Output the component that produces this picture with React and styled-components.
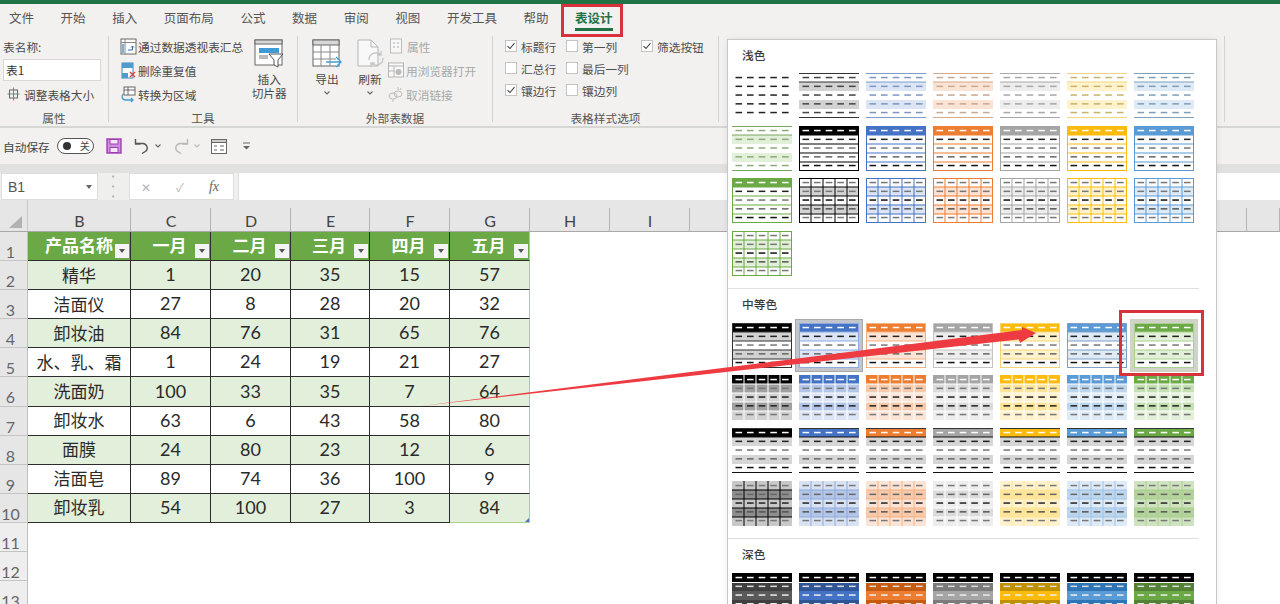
import React from 'react';
import styled, { createGlobalStyle } from 'styled-components';

const GlobalStyle = createGlobalStyle`
  html, body {
    margin: 0;
    padding: 0;
    background: #fff;
    font-family: "Noto Sans CJK SC", "Noto Sans", sans-serif;
  }
`;

const Page = styled.div`
  position: relative;
  width: 1280px;
  height: 604px;
  overflow: hidden;
  display: flex;
  flex-direction: column;
  background: #f2f1ef;
  color: #444;
  font-size: 11.7px;
`;

const TitleEdge = styled.div`
  height: 4px;
  background: #217346;
`;

const TabBar = styled.div`
  height: 30px;
  display: flex;
  align-items: flex-start;
  gap: 26.6px;
  padding-left: 9px;
`;

const Tab = styled.div`
  position: relative;
  font-size: 12.5px;
  line-height: 27px;
  height: 27px;
  color: ${({ $active }) => ($active ? '#217346' : '#555')};
  font-weight: ${({ $active }) => ($active ? 700 : 400)};

  ${({ $active }) => $active && `
    &::after {
      content: '';
      position: absolute;
      left: 0;
      right: 0;
      bottom: 0;
      height: 3px;
      background: #217346;
    }
  `}
`;

const Ribbon = styled.div`
  height: 92px;
  display: flex;
  border-bottom: 2px solid #d6d6d4;
  box-sizing: content-box;
`;

const Group = styled.div`
  width: ${({ $w }) => $w}px;
  box-sizing: border-box;
  margin: 2px 0 4px;
  border-right: 1px solid #d2d2d0;
  display: flex;
  flex-direction: column;
`;

const GroupBody = styled.div`
  flex: none;
  height: 72px;
  margin: -2px 0 2px;
  display: flex;
  padding-left: ${({ $pad }) => $pad || 0}px;
`;

const GroupLabel = styled.div`
  height: 20px;
  line-height: 20px;
  text-align: center;
  color: #555;
`;

const Stack = styled.div`
  display: flex;
  flex-direction: column;
`;

const ToolRow = styled.div`
  height: 24px;
  display: flex;
  align-items: center;
  gap: ${({ $gap }) => $gap || 1}px;
  white-space: nowrap;
  color: ${({ $off }) => ($off ? '#a8a8a8' : '#4a4a4a')};
`;

const NameInput = styled.div`
  width: 98px;
  height: 22px;
  box-sizing: border-box;
  border: 1px solid #d8d8d8;
  background: #fff;
  line-height: 20px;
  padding-left: 2px;
  color: #333;
`;

const BigTool = styled.div`
  width: ${({ $w }) => $w}px;
  margin-left: ${({ $gap }) => $gap}px;
  padding-top: 5px;
  display: flex;
  flex-direction: column;
  align-items: center;
  line-height: 14px;
  text-align: center;
  color: #4a4a4a;

  svg:first-child {
    margin-bottom: 3px;
  }

  span + svg {
    margin-top: 5px;
  }
`;

const OptionGrid = styled.div`
  display: grid;
  grid-template-columns: 61px 75px auto;
  grid-auto-rows: 22px;
  padding-top: 1px;
`;

const Option = styled.div`
  display: flex;
  align-items: center;
  gap: 4px;
  white-space: nowrap;
  color: #4f4f4f;
`;

const Box = styled.span`
  width: 12px;
  height: 12px;
  box-sizing: border-box;
  border: 1px solid #c4c4c4;
  background: #fff;
  display: flex;
  align-items: center;
  justify-content: center;
`;

const QuickBar = styled.div`
  height: 36px;
  display: flex;
  align-items: center;
  padding-left: 3px;
`;

const Toggle = styled.div`
  position: relative;
  width: 37px;
  height: 16px;
  margin-left: 7px;
  box-sizing: border-box;
  border: 1px solid #555;
  border-radius: 9px;
  background: #fff;
  font-size: 10px;
  line-height: 14px;
  text-align: right;
  padding-right: 3px;

  &::before {
    content: '';
    position: absolute;
    left: 5px;
    top: 3px;
    width: 8px;
    height: 8px;
    border-radius: 50%;
    background: #333;
  }
`;

const QuickIcon = styled.span`
  display: flex;
  margin-left: ${({ $gap }) => $gap}px;
`;

const Strip = styled.div`
  height: 9px;
  background: #e1e1e0;
`;

const FormulaBar = styled.div`
  height: 27px;
  display: flex;
  background: #efefee;
  padding-left: 1px;
`;

const NameBox = styled.div`
  width: 97px;
  box-sizing: border-box;
  background: #fff;
  border: 1px solid #dedede;
  display: flex;
  align-items: center;
  justify-content: space-between;
  padding: 0 5px 0 6px;
  font-family: "Liberation Sans", sans-serif;
  font-size: 14px;
  color: #555;
`;

const Caret = styled.span`
  width: 0;
  height: 0;
  border-left: 3.5px solid transparent;
  border-right: 3.5px solid transparent;
  border-top: 4px solid ${({ $color }) => $color || '#666'};
`;

const Dots = styled.div`
  width: 31px;
  display: flex;
  align-items: center;
  justify-content: center;
  color: #aaa;
  font-size: 9px;
  line-height: 5px;
  writing-mode: vertical-rl;
  letter-spacing: 1px;
`;

const FnBox = styled.div`
  width: 105px;
  box-sizing: border-box;
  background: #fff;
  border: 1px solid #dedede;
  display: flex;
  align-items: center;
  padding-left: 11px;
  gap: 25px;
  color: #b5b5b5;
`;

const FxMark = styled.span`
  font-family: "Liberation Serif", serif;
  font-style: italic;
  font-size: 14px;
  color: #666;
`;

const FormulaInput = styled.div`
  flex: 1;
  margin-left: 4px;
  background: #fff;
  border-left: 1px solid #dedede;
`;

const Sheet = styled.div`
  flex: 1;
  min-height: 0;
  background: #fff;
  display: flex;
  flex-direction: column;
`;

const HeadRow = styled.div`
  height: 32px;
  flex: none;
  display: flex;
  background: #e6e6e6;
  border-bottom: 1px solid #a8a8a8;
  box-sizing: border-box;
`;

const Corner = styled.div`
  width: 28px;
  display: flex;
  align-items: flex-end;
  justify-content: center;
  padding-bottom: 3px;
  box-sizing: border-box;
  border-right: 1px solid #c8c8c8;

  &::before {
    content: '';
    width: 0;
    height: 0;
    margin-left: 4px;
    border-left: 13px solid transparent;
    border-bottom: 12px solid #b2b2b2;
  }
`;

const ColHead = styled.div`
  width: ${({ $w }) => $w}px;
  box-sizing: border-box;
  position: relative;
  text-align: center;
  font-family: Lato, sans-serif;
  font-size: 16px;
  line-height: 20px;
  padding-top: 11px;
  color: #444;

  &::after {
    content: '';
    position: absolute;
    right: 0;
    top: 8px;
    bottom: 0;
    width: 1px;
    background: #b4b4b4;
  }
`;

const Row = styled.div`
  height: 29.1px;
  flex: none;
  display: flex;
`;

const RowHead = styled.div`
  width: 28px;
  box-sizing: border-box;
  background: ${({ $dim }) => ($dim ? '#eeeeee' : '#e6e6e6')};
  border-right: 1px solid #c0c0c0;
  border-bottom: 1px solid #c4c4c4;
  font-family: Lato, sans-serif;
  font-size: 16px;
  color: #666;
  text-align: center;
  padding-right: 6px;
  line-height: 40px;
  overflow: hidden;
`;

const Cell = styled.div`
  position: relative;
  width: ${({ $w }) => $w}px;
  box-sizing: border-box;
  display: flex;
  align-items: center;
  justify-content: center;
  white-space: nowrap;
  padding-bottom: 2px;
  background: ${({ $band }) => ($band ? '#e2efda' : '#fff')};
  border-right: 1px solid ${({ $last }) => ($last ? '#a9d08e' : '#2c2c2c')};
  border-bottom: 1px solid #2c2c2c;
  color: #2a2a2a;
  font-family: Lato, "Noto Sans CJK SC", sans-serif;
  font-size: 18px;

  ${({ $zh }) => $zh && `
    font-family: "Noto Sans CJK SC", sans-serif;
    font-size: 17px;
  `}

  ${({ $last, $end }) => $last && $end && `
    border-bottom-color: #a9d08e;
  `}
`;

const HeadCell = styled(Cell)`
  background: #6aa945;
  color: #fff;
  font-family: "Noto Sans CJK SC", sans-serif;
  font-size: 17px;
  font-weight: 700;
  padding-bottom: 3px;
  padding-right: ${({ $wide }) => ($wide ? 0 : 2)}px;
`;

const FilterButton = styled.span`
  position: absolute;
  right: 1px;
  bottom: 2px;
  width: 14px;
  height: 14px;
  background: #f4f4f4;
  display: flex;
  align-items: center;
  justify-content: center;
`;

const ResizeHandle = styled.span`
  position: absolute;
  right: 0;
  bottom: 0;
  width: 0;
  height: 0;
  border-left: 4px solid transparent;
  border-bottom: 4px solid #4472c4;
`;

const StylePopup = styled.div`
  position: absolute;
  left: 727px;
  top: 39px;
  width: 490px;
  height: 565px;
  box-sizing: border-box;
  background: #fff;
  border: 1px solid #c8c8c8;
  border-bottom: 0;
  box-shadow: 0 0 6px rgba(0, 0, 0, 0.08);
`;

const Section = styled.div`
  padding: 6px 0 12px 4px;
  border-bottom: ${({ $end }) => ($end ? 0 : '1px solid #dfdfdf')};
  margin-right: 17px;
`;

const SectionTitle = styled.div`
  font-size: 11.7px;
  line-height: 18px;
  font-weight: 500;
  color: #3a3a3a;
  padding-left: 10px;
  margin-bottom: ${({ $first }) => ($first ? 9 : 10)}px;
`;

const ThumbGrid = styled.div`
  display: grid;
  grid-template-columns: repeat(7, 60px);
  grid-auto-rows: 45px;
  column-gap: 7px;
  row-gap: 7.6px;
`;

const ThumbCell = styled.div`
  width: 60px;
  height: 45px;
  ${({ $mark }) => $mark && `
    box-shadow: 0 0 0 3px ${$mark};
    outline: 1px solid ${$mark === '#c2c6cc' ? '#a8a8a8' : $mark};
    outline-offset: 3px;
  `}

  svg {
    display: block;
    background: #fff;
  }
`;

const Callout = styled.div`
  position: absolute;
  left: ${({ $x }) => $x}px;
  top: ${({ $y }) => $y}px;
  width: ${({ $w }) => $w}px;
  height: ${({ $h }) => $h}px;
  box-sizing: border-box;
  border: 3px solid #d8323c;
`;

const ArrowLayer = styled.svg`
  position: absolute;
  left: 0;
  top: 0;
  pointer-events: none;
`;

const TONES = {
  black: { main: '#000', tint: '#d2d2d2', mid: '#a0a0a0', soft: '#333', rule: '#333', dash: '#444', deep: '#3f3f3f', bright: '#5a5a5a', grid: '#000', deepMid: '#8e8e8e', deepTint: '#c8c8c8' },
  blue: { main: '#4472c4', tint: '#dbe5f5', mid: '#b4c6e7', soft: '#8faadc', rule: '#7f9bc9', dash: '#7f96c0', deep: '#2f5597', bright: '#4472c4', grid: '#8faadc', deepMid: '#b4c6e7', deepTint: '#d9e2f3' },
  orange: { main: '#ed7d31', tint: '#fbe4d5', mid: '#f7caac', soft: '#f4b183', rule: '#d8a888', dash: '#c8a890', deep: '#c55a11', bright: '#ed7d31', grid: '#f4b183', deepMid: '#f7caac', deepTint: '#fbe4d5' },
  gray: { main: '#a5a5a5', tint: '#ededed', mid: '#dbdbdb', soft: '#c4c4c4', rule: '#a8a8a8', dash: '#a8a8a8', deep: '#7b7b7b', bright: '#a5a5a5', grid: '#fff', deepMid: '#dbdbdb', deepTint: '#ededed' },
  gold: { main: '#fdbb0e', tint: '#fff2cc', mid: '#ffe599', soft: '#f4d576', rule: '#f0d77e', dash: '#c8b468', deep: '#bf9000', bright: '#fdbb0e', grid: '#ffe599', deepMid: '#ffe599', deepTint: '#fff2cc' },
  sky: { main: '#5b9bd5', tint: '#deeaf6', mid: '#bdd6ee', soft: '#7f9fc4', rule: '#7f9fb8', dash: '#7f9fb8', deep: '#2e75b6', bright: '#5b9bd5', grid: '#9dc3e6', deepMid: '#bdd6ee', deepTint: '#deeaf6' },
  green: { main: '#6aa945', tint: '#e2efd9', mid: '#c5e0b3', soft: '#a9d08e', rule: '#7ba65e', dash: '#8cab78', deep: '#538135', bright: '#6aa945', grid: '#a9d08e', deepMid: '#b4d39c', deepTint: '#cfe3c0' },
};

const TONE_ORDER = ['black', 'blue', 'orange', 'gray', 'gold', 'sky', 'green'];

const INK = ['#fff', '#222', '#777', '#666', '#111'];
const ROW_H = 9;
const DASH_X = [3.5, 15, 26.7, 38.3, 50];
const DASH_Y = [4.5, 13.3, 22, 30.8, 39.5];
const V_LINES = [12, 24, 36, 48];

const KINDS = {
  plain: () => ({ fills: [], ink: ['#222', '#222', '#222', '#222', '#222'] }),
  stripe: (t) => ({
    fills: [null, t.tint, null, t.tint, null],
    rules: [[0.5, t.rule], [9, t.rule], [44.5, t.rule]],
    ink: [t.dash, t.dash, t.dash, t.dash, t.dash],
  }),
  outline: (t) => ({ fills: [t.main], border: t.main, h: t.main, ink: INK }),
  grid: (t) => ({
    fills: [null, t.tint, null, t.tint, null],
    border: t.main,
    h: t.main,
    v: t.main,
    ink: ['#777', '#777', '#111', '#555', '#777'],
  }),
  medium1: (t) => ({ fills: [t.main, t.tint, null, t.tint, null], border: t.soft, h: t.soft, ink: INK }),
  medium2: (t) => ({ fills: [t.main, t.mid, t.tint, t.mid, t.tint], h: '#fff', v: '#fff', ink: ['#fff', '#777', '#222', '#222', '#777'] }),
  medium3: (t) => ({
    fills: [t.main, '#d6d6d6', null, '#d6d6d6', null],
    rules: [[0.5, '#333'], [9, '#111'], [44.5, '#111']],
    ink: INK,
  }),
  medium4: (t) => ({
    fills: [t.deepTint, t.deepMid, t.deepTint, t.deepMid, t.deepTint],
    h: t.grid,
    v: t.grid,
    ink: ['#777', '#666', '#222', '#555', '#777'],
  }),
  dark: (t) => ({
    fills: ['#000', t.deep, t.bright, t.deep, t.deep],
    rules: [[9.5, '#fff']],
    ink: ['#fff', '#ddd', '#eee', '#fff', '#fff'],
  }),
};

const Thumb = ({ kind, tone }) => {
  const t = TONES[tone];
  const cfg = KINDS[kind](t);
  return (
    <svg width="60" height="45" viewBox="0 0 60 45">
      {cfg.fills.map((fill, i) => fill && <rect key={i} x="0" y={i * ROW_H} width="60" height={ROW_H} fill={fill} />)}
      {cfg.h && [1, 2, 3, 4].map((i) => <rect key={i} x="0" y={i * ROW_H - 0.5} width="60" height="1" fill={cfg.h} />)}
      {cfg.v && V_LINES.map((x) => <rect key={x} x={x - 0.5} y="0" width="1" height="45" fill={cfg.v} />)}
      {cfg.rules && cfg.rules.map(([y, color]) => <rect key={y} x="0" y={y - 0.5} width="60" height="1" fill={color} />)}
      {cfg.border && <rect x="0.5" y="0.5" width="59" height="44" fill="none" stroke={cfg.border} />}
      {DASH_Y.map((y, r) => DASH_X.map((x) => (
        <rect key={`${r}-${x}`} x={x} y={y - 0.7} width="6.6" height="1.5" fill={cfg.ink[r]} />
      )))}
    </svg>
  );
};

const LIGHT = [
  ['plain', 'black'],
  ...TONE_ORDER.map((tone) => ['stripe', tone]),
  ...TONE_ORDER.map((tone) => ['outline', tone]),
  ...TONE_ORDER.map((tone) => ['grid', tone]),
];
const MEDIUM = ['medium1', 'medium2', 'medium3', 'medium4'].flatMap((kind) => TONE_ORDER.map((tone) => [kind, tone]));
const DARK = TONE_ORDER.map((tone) => ['dark', tone]);
const MARKS = { 1: '#c2c6cc', 6: '#cfd3c8' };

const Gallery = ({ items, marks = {} }) => (
  <ThumbGrid>
    {items.map(([kind, tone], i) => (
      <ThumbCell key={i} $mark={marks[i]}>
        <Thumb kind={kind} tone={tone} />
      </ThumbCell>
    ))}
  </ThumbGrid>
);

const Pivot = () => (
  <svg width="17" height="17" viewBox="0 0 17 17">
    <rect x="1" y="1" width="15" height="15" fill="#fff" stroke="#666" />
    <path d="M1 4.5h15M5 1v15" stroke="#888" />
    <rect x="2" y="6" width="2" height="9" fill="#7fb2d8" />
    <path d="M8 12h4.5V8M11 9.5l1.5-1.5 1.5 1.5" fill="none" stroke="#2f6ea5" />
  </svg>
);

const Dedupe = () => (
  <svg width="17" height="17" viewBox="0 0 17 17">
    <rect x="2" y="1" width="11" height="15" fill="#fff" stroke="#3f87bd" />
    <rect x="2" y="1" width="11" height="5" fill="#4f9bd0" />
    <rect x="2" y="11" width="6" height="5" fill="#4f9bd0" />
    <path d="M10 10l5 5M15 10l-5 5" stroke="#d9453d" strokeWidth="1.4" />
  </svg>
);

const Convert = () => (
  <svg width="17" height="17" viewBox="0 0 17 17">
    <rect x="4" y="1" width="11" height="8" fill="#fff" stroke="#666" />
    <path d="M4 4h11M8 1v8" stroke="#666" />
    <path d="M3 8C1 11 2 14 6 14h7M11 12l2 2-2 2" fill="none" stroke="#3f9bd0" strokeWidth="1.3" />
  </svg>
);

const Fit = () => (
  <svg width="13" height="14" viewBox="0 0 13 14">
    <rect x="2.5" y="3" width="8" height="8" fill="none" stroke="#666" />
    <path d="M2.5 7h8M6.5 0.5v13M0.5 7h2M10.5 7h2" stroke="#5f8f7f" />
  </svg>
);

const Slicer = () => (
  <svg width="30" height="30" viewBox="0 0 30 30">
    <rect x="1" y="1" width="27" height="25" fill="#fff" stroke="#666" />
    <rect x="1" y="1" width="27" height="4" fill="#d8d8d8" stroke="#666" />
    <rect x="5" y="9" width="20" height="5" fill="#3f9bd8" />
    <rect x="5" y="16" width="9" height="4" fill="#bbb" />
    <path d="M15 15h14l-5 6v7l-4-2v-5z" fill="#fff" stroke="#555" />
  </svg>
);

const Export = () => (
  <svg width="30" height="30" viewBox="0 0 30 30">
    <rect x="1" y="1" width="26" height="26" fill="#fff" stroke="#666" />
    <rect x="1" y="1" width="26" height="5" fill="#d8d8d8" stroke="#666" />
    <path d="M1 13h26M1 20h26M9 6v21M18 6v21" stroke="#888" />
    <path d="M14 23h15M24 18l5 5-5 5" fill="#fff" stroke="#3f9bd8" strokeWidth="1.3" />
  </svg>
);

const Refresh = () => (
  <svg width="30" height="30" viewBox="0 0 30 30">
    <path d="M3 1h13l7 7v19H3z" fill="#f8f8f8" stroke="#b5b5b5" />
    <path d="M16 1v7h7" fill="none" stroke="#b5b5b5" />
    <path d="M14 21a7 7 0 0 1 12-5M28 19a7 7 0 0 1-12 5M26 12v4h-4M16 28v-4h4" fill="none" stroke="#c4c4c4" strokeWidth="1.3" />
  </svg>
);

const Props = () => (
  <svg width="12" height="16" viewBox="0 0 12 16">
    <rect x="0.5" y="1" width="11" height="14" fill="#f8f8f8" stroke="#bbb" />
    <path d="M3 5h2M7 5h2M3 9h2M7 9h2" stroke="#aaa" />
  </svg>
);

const Browser = () => (
  <svg width="16" height="16" viewBox="0 0 16 16">
    <rect x="0.5" y="1" width="15" height="14" fill="#f8f8f8" stroke="#b4b4b4" />
    <path d="M0.5 4h15M0.5 9h6M6 4v11" stroke="#b4b4b4" />
    <circle cx="10.5" cy="10" r="3" fill="#bbb" />
  </svg>
);

const Unlink = () => (
  <svg width="16" height="16" viewBox="0 0 16 16" fill="none" stroke="#bdbdbd">
    <ellipse cx="5" cy="10" rx="4" ry="3" />
    <ellipse cx="10" cy="8" rx="4" ry="3" />
    <path d="M5 13v3M10 1v3M13 2l-1 2" />
  </svg>
);

const SaveIcon = () => (
  <svg width="16" height="16" viewBox="0 0 16 16">
    <rect x="1" y="1" width="14" height="14" fill="#cf8fdc" stroke="#a03cb4" strokeWidth="1.4" />
    <rect x="4" y="1.5" width="8" height="4.5" fill="#f4e6f7" stroke="#a03cb4" />
    <rect x="4" y="9.5" width="8" height="5" fill="#f4e6f7" stroke="#a03cb4" />
  </svg>
);

const Undo = ({ color }) => (
  <svg width="16" height="16" viewBox="0 0 16 16" fill="none" stroke={color} strokeWidth="1.4">
    <path d="M1.5 5.5h7.5a4.5 4.5 0 0 1 3 7.5L8 15.5M1.5 1v5h5" />
  </svg>
);

const Redo = ({ color }) => (
  <svg width="16" height="16" viewBox="0 0 16 16" fill="none" stroke={color} strokeWidth="1.4">
    <path d="M14.5 5.5H7a4.5 4.5 0 0 0-3 7.5l4 2.5M14.5 1v5h-5" />
  </svg>
);

const Chevron = ({ color = '#666', w = 6 }) => (
  <svg width={w} height="4" viewBox="0 0 6 4" fill="none" stroke={color} strokeWidth="1.1">
    <path d="M0.5 0.5L3 3l2.5-2.5" />
  </svg>
);

const FormIcon = () => (
  <svg width="16" height="15" viewBox="0 0 16 15">
    <rect x="0.5" y="0.5" width="15" height="14" fill="#fff" stroke="#666" />
    <rect x="0.5" y="0.5" width="15" height="3" fill="#ccc" stroke="#666" />
    <path d="M3 7h3M9 7h4M3 11h3M9 11h4" stroke="#666" />
  </svg>
);

const Customize = () => (
  <svg width="9" height="8" viewBox="0 0 9 8">
    <path d="M1 1h7" stroke="#666" />
    <path d="M1 4h7L4.5 7.5z" fill="#666" />
  </svg>
);

const Check = () => (
  <svg width="10" height="10" viewBox="0 0 10 10" fill="none" stroke="#444" strokeWidth="1.1">
    <path d="M1.5 5.2L4 7.5 8.5 2.2" />
  </svg>
);

const OptionItem = ({ on, children }) => (
  <Option>
    <Box>{on && <Check />}</Box>
    <span>{children}</span>
  </Option>
);

const TABS = ['文件', '开始', '插入', '页面布局', '公式', '数据', '审阅', '视图', '开发工具', '帮助'];

const COLS = [
  ['B', 103], ['C', 80], ['D', 80], ['E', 79], ['F', 80], ['G', 80],
  ['H', 80], ['I', 80], ['', 80], ['', 80], ['', 80], ['', 80], ['', 80], ['', 80], ['', 77], ['', 33],
];

const HEADERS = ['产品名称', '一月', '二月', '三月', '四月', '五月'];
const ROWS = [
  ['精华', 1, 20, 35, 15, 57],
  ['洁面仪', 27, 8, 28, 20, 32],
  ['卸妆油', 84, 76, 31, 65, 76],
  ['水、乳、霜', 1, 24, 19, 21, 27],
  ['洗面奶', 100, 33, 35, 7, 64],
  ['卸妆水', 63, 6, 43, 58, 80],
  ['面膜', 24, 80, 23, 12, 6],
  ['洁面皂', 89, 74, 36, 100, 9],
  ['卸妆乳', 54, 100, 27, 3, 84],
];

export default function App() {
  return (
    <Page>
      <GlobalStyle />
      <TitleEdge />
      <TabBar>
        {TABS.map((tab) => <Tab key={tab}>{tab}</Tab>)}
        <Tab $active>表设计</Tab>
      </TabBar>

      <Ribbon>
        <Group $w={109}>
          <GroupBody $pad={3}>
            <Stack>
              <ToolRow>表名称:</ToolRow>
              <ToolRow><NameInput>表1</NameInput></ToolRow>
              <ToolRow $gap={4}><QuickIcon $gap={4}><Fit /></QuickIcon>调整表格大小</ToolRow>
            </Stack>
          </GroupBody>
          <GroupLabel>属性</GroupLabel>
        </Group>

        <Group $w={189}>
          <GroupBody $pad={11}>
            <Stack>
              <ToolRow><Pivot />通过数据透视表汇总</ToolRow>
              <ToolRow><Dedupe />删除重复值</ToolRow>
              <ToolRow><Convert />转换为区域</ToolRow>
            </Stack>
            <BigTool $w={38} $gap={7}>
              <Slicer />
              <span>插入</span>
              <span>切片器</span>
            </BigTool>
          </GroupBody>
          <GroupLabel>工具</GroupLabel>
        </Group>

        <Group $w={195}>
          <GroupBody $pad={12}>
            <BigTool $w={34} $gap={0}>
              <Export />
              <span>导出</span>
              <Chevron />
            </BigTool>
            <BigTool $w={34} $gap={9}>
              <Refresh />
              <span>刷新</span>
              <Chevron />
            </BigTool>
            <Stack>
              <ToolRow $off $gap={5}><QuickIcon $gap={3}><Props /></QuickIcon>属性</ToolRow>
              <ToolRow $off $gap={2}><QuickIcon $gap={1}><Browser /></QuickIcon>用浏览器打开</ToolRow>
              <ToolRow $off $gap={2}><QuickIcon $gap={1}><Unlink /></QuickIcon>取消链接</ToolRow>
            </Stack>
          </GroupBody>
          <GroupLabel>外部表数据</GroupLabel>
        </Group>

        <Group $w={226}>
          <GroupBody $pad={12}>
            <OptionGrid>
              <OptionItem on>标题行</OptionItem>
              <OptionItem>第一列</OptionItem>
              <OptionItem on>筛选按钮</OptionItem>
              <OptionItem>汇总行</OptionItem>
              <OptionItem>最后一列</OptionItem>
              <span />
              <OptionItem on>镶边行</OptionItem>
              <OptionItem>镶边列</OptionItem>
            </OptionGrid>
          </GroupBody>
          <GroupLabel>表格样式选项</GroupLabel>
        </Group>

        <Group $w={506} />
      </Ribbon>

      <QuickBar>
        自动保存
        <Toggle>关</Toggle>
        <QuickIcon $gap={12}><SaveIcon /></QuickIcon>
        <QuickIcon $gap={12}><Undo color="#555" /></QuickIcon>
        <QuickIcon $gap={5}><Chevron /></QuickIcon>
        <QuickIcon $gap={12}><Redo color="#b8b8b8" /></QuickIcon>
        <QuickIcon $gap={5}><Chevron color="#bbb" /></QuickIcon>
        <QuickIcon $gap={11}><FormIcon /></QuickIcon>
        <QuickIcon $gap={15}><Customize /></QuickIcon>
      </QuickBar>
      <Strip />

      <FormulaBar>
        <NameBox>B1<Caret /></NameBox>
        <Dots>···</Dots>
        <FnBox>
          <span>✕</span>
          <span>✓</span>
          <FxMark>fx</FxMark>
        </FnBox>
        <FormulaInput />
      </FormulaBar>

      <Sheet>
        <HeadRow>
          <Corner />
          {COLS.map(([name, w], i) => <ColHead key={i} $w={w}>{name}</ColHead>)}
        </HeadRow>

        <Row>
          <RowHead>1</RowHead>
          {HEADERS.map((title, i) => (
            <HeadCell key={title} $w={COLS[i][1]} $last={i === 5} $wide={i === 0}>
              {title}
              <FilterButton><Caret $color="#555" /></FilterButton>
            </HeadCell>
          ))}
        </Row>

        {ROWS.map((row, r) => (
          <Row key={row[0]}>
            <RowHead>{r + 2}</RowHead>
            {row.map((value, c) => (
              <Cell
                key={c}
                $w={COLS[c][1]}
                $band={r % 2 === 0}
                $zh={c === 0}
                $last={c === 5}
                $end={r === ROWS.length - 1}
              >
                {value}
                {r === ROWS.length - 1 && c === 5 && <ResizeHandle />}
              </Cell>
            ))}
          </Row>
        ))}

        {[11, 12, 13].map((n) => (
          <Row key={n}>
            <RowHead $dim>{n}</RowHead>
          </Row>
        ))}
      </Sheet>

      <StylePopup>
        <Section>
          <SectionTitle $first>浅色</SectionTitle>
          <Gallery items={LIGHT} />
        </Section>
        <Section>
          <SectionTitle>中等色</SectionTitle>
          <Gallery items={MEDIUM} marks={MARKS} />
        </Section>
        <Section $end>
          <SectionTitle>深色</SectionTitle>
          <Gallery items={DARK} />
        </Section>
      </StylePopup>

      <Callout $x={561} $y={4} $w={62} $h={33} />
      <Callout $x={1119} $y={310} $w={85} $h={66} />

      <ArrowLayer width="1280" height="604" viewBox="0 0 1280 604">
        <polygon points="421,406 1022,330 1022,327 1036,333 1020,343 1019,339.5" fill="#ee3b42" />
      </ArrowLayer>
    </Page>
  );
}
